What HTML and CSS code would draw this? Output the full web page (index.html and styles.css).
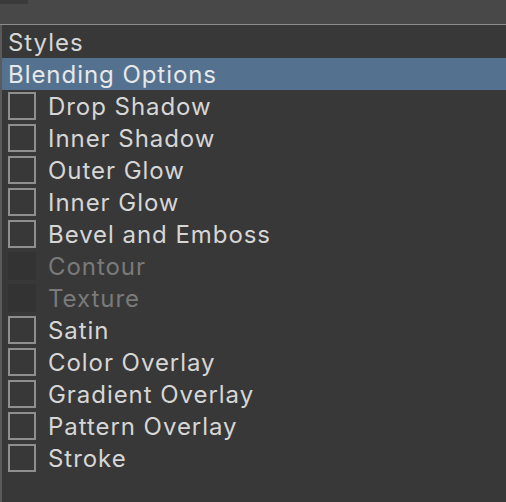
FILE: index.html
```html
<!DOCTYPE html>
<html>
<head>
<meta charset="utf-8">
<link rel="stylesheet" href="styles.css">
</head>
<body>
<div class="topbar"><div class="tab"></div></div>
<div class="panel">
  <div class="row header">Styles</div>
  <div class="row selected">Blending Options</div>
  <div class="row"><span class="box"></span>Drop Shadow</div>
  <div class="row"><span class="box"></span>Inner Shadow</div>
  <div class="row"><span class="box"></span>Outer Glow</div>
  <div class="row"><span class="box"></span>Inner Glow</div>
  <div class="row"><span class="box"></span>Bevel and Emboss</div>
  <div class="row disabled"><span class="box"></span>Contour</div>
  <div class="row disabled"><span class="box"></span>Texture</div>
  <div class="row"><span class="box"></span>Satin</div>
  <div class="row"><span class="box"></span>Color Overlay</div>
  <div class="row"><span class="box"></span>Gradient Overlay</div>
  <div class="row"><span class="box"></span>Pattern Overlay</div>
  <div class="row"><span class="box"></span>Stroke</div>
</div>
</body>
</html>
```
FILE: styles.css
```css
html, body {
  margin: 0;
  padding: 0;
  background: #383838;
  height: 100%;
  overflow: hidden;
}
body {
  font-family: Inter, "Noto Sans", sans-serif;
  font-size: 24px;
  letter-spacing: 0.95px;
  color: #d6d6d6;
}
.topbar {
  height: 24px;
  background: #484848;
  border-bottom: 1px solid #8c8c8c;
}
.tab {
  width: 28px;
  height: 4px;
  background: #3a3a3a;
}
.panel {
  border-left: 2px solid #5a5a5a;
  height: 477px;
  padding-top: 1px;
  box-sizing: border-box;
}
.row {
  height: 32px;
  display: flex;
  align-items: center;
  padding-left: 6px;
}
.selected {
  background: #54728f;
  color: #e8e8e8;
}
.box {
  width: 24px;
  height: 24px;
  border: 2px solid #8f8f8f;
  margin-right: 12px;
  flex: none;
}
.disabled {
  color: #7a7a7a;
}
.disabled .box {
  border-color: #333333;
  background: #333333;
}
```
